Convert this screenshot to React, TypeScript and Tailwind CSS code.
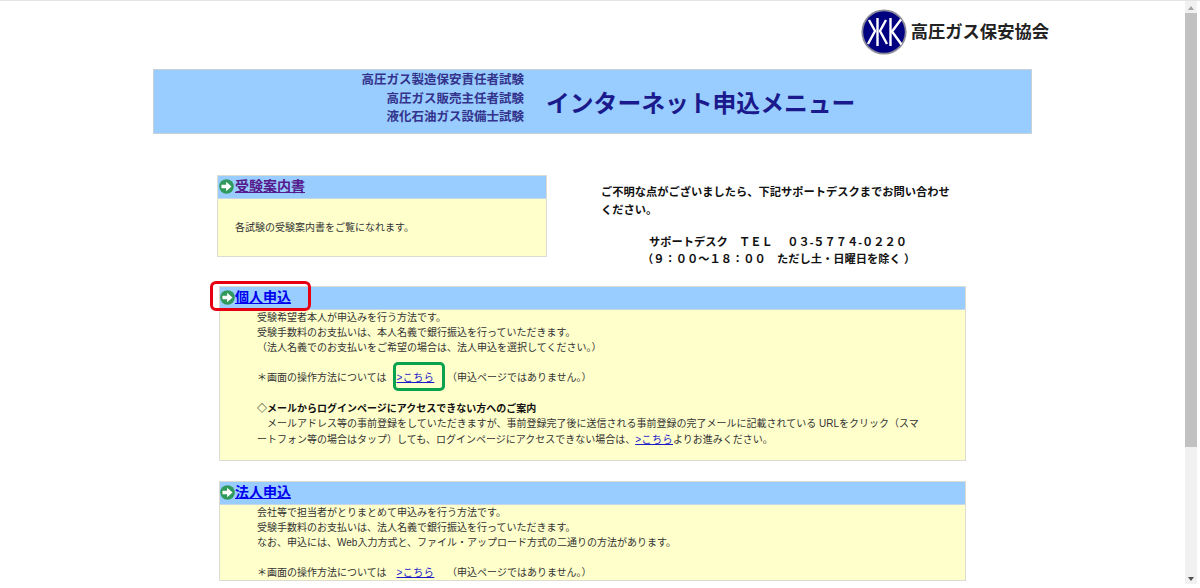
import type { ReactNode } from 'react'

const FONT = "font-['Liberation_Sans','Noto_Sans_CJK_JP',sans-serif]"

function ArrowIcon() {
  return (
    <svg viewBox="0 0 16 16" className="w-[15px] h-[15px] shrink-0 -translate-y-[1px]">
      <circle cx="8" cy="8" r="7.8" fill="#2f9a5c" />
      <path d="M2.6 6.2h5V3l5.8 5-5.8 5V9.8h-5z" fill="#fff" />
    </svg>
  )
}

function Logo() {
  return (
    <svg viewBox="0 0 46 46" className="w-[46px] h-[46px] shrink-0">
      <circle cx="23" cy="23" r="22.6" fill="#8a8a9a" />
      <circle cx="23" cy="23" r="20.8" fill="#000080" />
      <g stroke="#fff" strokeWidth="2.4" fill="none">
        <path d="M16.5 9v28" />
        <path d="M8 11l6 11-7 13" />
        <path d="M25 11l-6 11 7 13" />
        <path d="M29.5 9v28" />
        <path d="M40 10.5l-9 12 9.5 13" />
      </g>
    </svg>
  )
}

function Card({ title, visited, outlined, titleClass, className, children }: {
  title: string
  visited?: boolean
  outlined?: boolean
  titleClass?: string
  className: string
  children: ReactNode
}) {
  return (
    <section className={`border border-[#dcdcd4] bg-[#ffffcc] ${className}`}>
      <div className={`h-[23px] bg-[#99ccff] flex items-center border-b border-[#c4d8e8] ${titleClass ?? ''}`}>
        <ArrowIcon />
        <a className={`relative -top-[1px] text-[14px] font-bold underline leading-none ${visited ? 'text-[#551a8b]' : 'text-[#0000ee]'}`}>
          {title}
          {outlined && (
            <span className="absolute left-[-25px] top-[-9px] w-[101px] h-[30px] border-[3px] border-[#e60012] rounded-[6px]" />
          )}
        </a>
      </div>
      {children}
    </section>
  )
}

function Here({ outlined }: { outlined?: boolean }) {
  return (
    <a className="relative text-[#1a1ac8] underline tracking-[0.5px]">
      &gt;こちら
      {outlined && (
        <span className="absolute left-[-4px] top-[-10px] w-[52px] h-[29px] border-[3px] border-[#0aa14f] rounded-[5px]" />
      )}
    </a>
  )
}

export default function App() {
  return (
    <div className={`${FONT} h-[588px] w-[1200px] overflow-hidden flex bg-white border-t border-[#e4e4e4]`}>
      <main className="w-[1185px] h-full">
        <div className="h-[68px] flex justify-end items-start pt-[8px] pr-[136px]">
          <div className="flex items-center gap-[4px]">
            <Logo />
            <span className="relative top-[1px] text-[17.3px] font-bold text-[#222]">高圧ガス保安協会</span>
          </div>
        </div>

        <header className="ml-[153px] w-[879px] h-[65px] bg-[#99ccff] border border-[#c8d0d8] flex items-center">
          <div className="w-[370px] -mt-[5px] text-right text-[12.5px] leading-[18.5px] font-bold text-[#33338c]">
            <p>高圧ガス製造保安責任者試験</p>
            <p>高圧ガス販売主任者試験</p>
            <p>液化石油ガス設備士試験</p>
          </div>
          <h1 className="ml-[22px] mt-[5px] text-[23.8px] font-bold text-[#1a1a8c]">インターネット申込メニュー</h1>
        </header>

        <div className="mt-[41px] ml-[217px] h-[82px] flex items-start">
          <Card title="受験案内書" visited titleClass="pl-[1px] gap-[1px]" className="w-[330px] h-[82px]">
            <p className="pl-[17px] pt-[21px] text-[10px] leading-[15px] text-[#333]">各試験の受験案内書をご覧になれます。</p>
          </Card>
          <div className="ml-[54px] pt-[8px] w-[352px] text-[11.25px] font-bold text-[#111] leading-[18px]">
            <p>ご不明な点がございましたら、下記サポートデスクまでお問い合わせください。</p>
            <p className="mt-[15px] ml-[48px] whitespace-pre leading-[16.5px]">サポートデスク　ＴＥＬ　 ０３-５７７４-０２２０</p>
            <p className="ml-[41px] whitespace-pre leading-[16.5px]">（９：００～１８：００　ただし土・日曜日を除く ）</p>
          </div>
        </div>

        <Card title="個人申込" outlined className="mt-[29px] ml-[219px] w-[747px] h-[175px]">
          <div className="-mt-[0.5px] pl-[37px] text-[10px] leading-[15.3px] text-[#333] whitespace-pre">
            <p>受験希望者本人が申込みを行う方法です。</p>
            <p>受験手数料のお支払いは、本人名義で銀行振込を行っていただきます。</p>
            <p>（法人名義でのお支払いをご希望の場合は、法人申込を選択してください。）</p>
            <p className="mt-[15px]">＊画面の操作方法については　<Here outlined />　 （申込ページではありません。）</p>
            <p className="mt-[15.3px] font-bold text-[#111]">◇メールからログインページにアクセスできない方へのご案内</p>
            <p>　メールアドレス等の事前登録をしていただきますが、事前登録完了後に送信される事前登録の完了メールに記載されている URLをクリック（スマ</p>
            <p>ートフォン等の場合はタップ）しても、ログインページにアクセスできない場合は、<Here />よりお進みください。</p>
          </div>
        </Card>

        <Card title="法人申込" className="mt-[20px] ml-[219px] w-[747px] h-[100px]">
          <div className="-mt-[0.5px] pl-[37px] text-[10px] leading-[15.3px] text-[#333] whitespace-pre">
            <p>会社等で担当者がとりまとめて申込みを行う方法です。</p>
            <p>受験手数料のお支払いは、法人名義で銀行振込を行っていただきます。</p>
            <p>なお、申込には、Web入力方式と、ファイル・アップロード方式の二通りの方法があります。</p>
            <p className="mt-[15px]">＊画面の操作方法については　<Here />　 （申込ページではありません。）</p>
          </div>
        </Card>
      </main>

      <aside className="w-[12px] h-[583px] bg-[#f1f1f1] flex flex-col items-center">
        <span className="mt-[5px] w-0 h-0 border-x-[3px] border-x-transparent border-b-[4px] border-b-[#a3a3a3]" />
        <div className="mt-[3px] w-full h-[434px] bg-[#c1c1c1]" />
        <span className="mt-auto mb-[3px] w-0 h-0 border-x-[3px] border-x-transparent border-t-[4px] border-t-[#505050]" />
      </aside>
    </div>
  )
}
